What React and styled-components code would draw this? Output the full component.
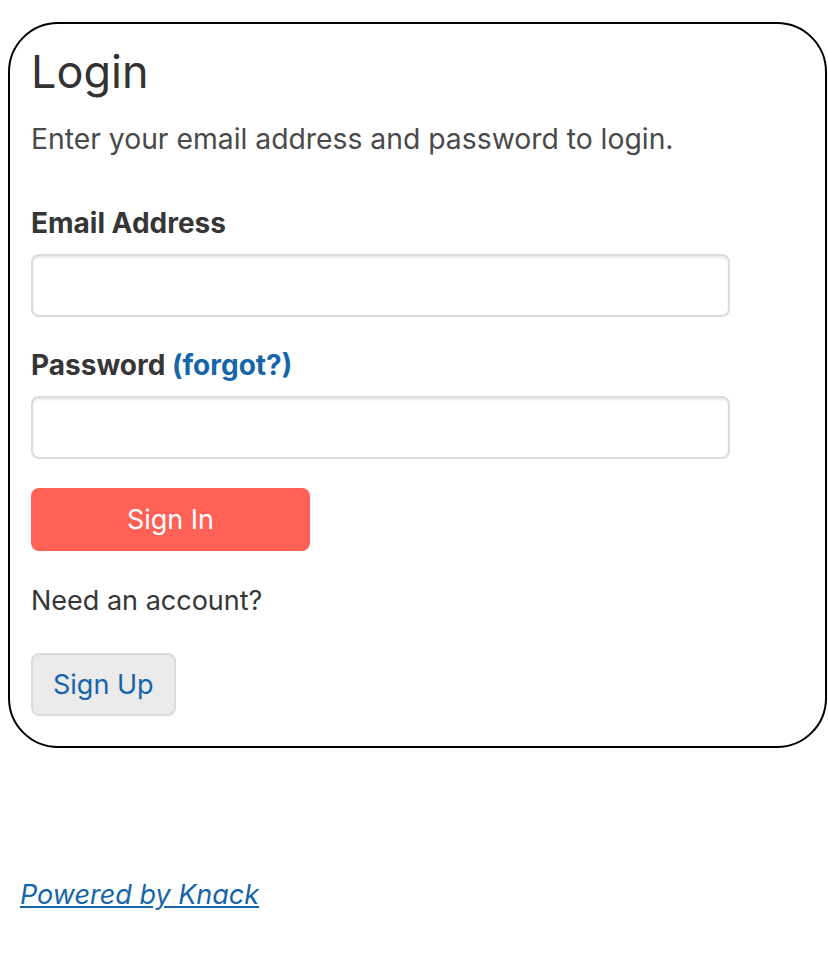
import React from "react";
import styled, { createGlobalStyle } from "styled-components";

const GlobalStyle = createGlobalStyle`
  body {
    margin: 0;
    background: #fff;
    font-family: Inter, "Noto Sans", sans-serif;
  }
`;

export default function App() {
  return (
    <>
      <GlobalStyle />
      <Page>
        <Card>
          <Title>Login</Title>
          <Intro>Enter your email address and password to login.</Intro>
          <Field>
            <Label>Email Address</Label>
            <Input type="email" />
          </Field>
          <Field>
            <Label>
              Password <Forgot href="#">(forgot?)</Forgot>
            </Label>
            <Input type="password" />
          </Field>
          <SubmitButton>Sign In</SubmitButton>
          <Prompt>Need an account?</Prompt>
          <SignUpButton>Sign Up</SignUpButton>
        </Card>
        <Footer>
          <PoweredLink href="#">Powered by Knack</PoweredLink>
        </Footer>
      </Page>
    </>
  );
}

const Page = styled.div`
  padding: 22px 1px 0 8px;
`;

const Card = styled.div`
  border: 2px solid #000;
  border-radius: 50px;
  padding: 20px 21px 30px 21px;
  display: flex;
  flex-direction: column;
  align-items: flex-start;
`;

const Title = styled.h1`
  margin: 0;
  font-size: 45px;
  font-weight: 400;
  line-height: 56px;
  color: #333;
`;

const Intro = styled.p`
  margin: 21px 0 0;
  font-size: 28.3px;
  line-height: 36px;
  color: #4a4a4a;
`;

const Field = styled.div`
  display: flex;
  flex-direction: column;
  align-self: stretch;
  margin-top: 48px;
  & + & {
    margin-top: 30px;
  }
`;

const Label = styled.label`
  font-size: 28px;
  font-weight: 700;
  line-height: 36px;
  color: #363636;
  margin-bottom: 13px;
`;

const Forgot = styled.a`
  color: #1565a8;
  text-decoration: none;
`;

const Input = styled.input`
  box-sizing: border-box;
  width: 699px;
  height: 63px;
  border: 2px solid #dbdbdb;
  border-radius: 8px;
  box-shadow: inset 0 2px 2px rgba(10, 10, 10, 0.08);
  background: #fff;
  outline: none;
`;

const BaseButton = styled.button`
  box-sizing: border-box;
  height: 63px;
  border-radius: 8px;
  font-family: inherit;
  font-size: 27px;
  cursor: pointer;
`;

const SubmitButton = styled(BaseButton)`
  margin-top: 29px;
  width: 279px;
  border: none;
  background: #ff6157;
  color: #fff;
`;

const Prompt = styled.p`
  margin: 32px 0 0;
  font-size: 27px;
  line-height: 36px;
  color: #363636;
`;

const SignUpButton = styled(BaseButton)`
  margin-top: 34px;
  padding: 0 20px;
  border: 2px solid #dbdbdb;
  background: #ebebeb;
  color: #1565a8;
`;

const Footer = styled.div`
  margin-top: 130px;
  padding-left: 12px;
`;

const PoweredLink = styled.a`
  font-size: 27px;
  font-style: italic;
  color: #1565a8;
  text-decoration: underline;
`;
